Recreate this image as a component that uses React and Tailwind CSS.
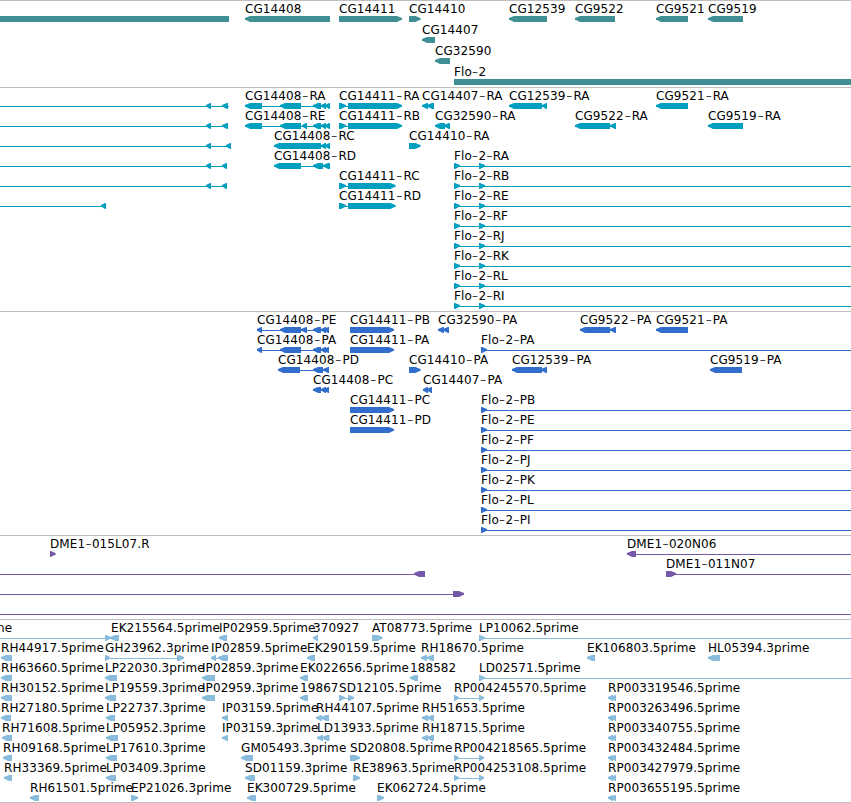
import React from "react";

const VIEW_WIDTH = 851;

// Feature: [label, strand, segments, lineStart, lineEnd]
// strand: "L" points left, "R" points right, "N" is a plain block.
const f = (label, strand, segments, lineStart, lineEnd) => ({
  label,
  strand,
  segments,
  lineStart: lineStart ?? (segments.length ? segments[0][0] : 0),
  lineEnd: lineEnd ?? (segments.length ? segments[segments.length - 1][1] : 0),
});

const floR = (name) => f(name, "R", [[454, 460], [479, 485]], 454, VIEW_WIDTH);
const floP = (name) => f(name, "R", [[481, 487]], 481, VIEW_WIDTH);
const rp = (name) => f(name, "L", [[608, 613], [611, 616]]);
const rpRight = (name) => f(name, "R", [[454, 459], [479, 484]]);

const tracks = [
  {
    name: "genes",
    height: "h-[87px]",
    row: "h-[21px]",
    color: "fill-[#408f94]",
    rows: [
      [
        f("", "N", [[0, 229]]),
        f("CG14408", "L", [[245, 330]]),
        f("CG14411", "R", [[339, 402]]),
        f("CG14410", "R", [[409, 420.5]]),
        f("CG12539", "L", [[509, 547]]),
        f("CG9522", "L", [[575, 615]]),
        f("CG9521", "L", [[656, 688]]),
        f("CG9519", "L", [[708, 743]]),
      ],
      [f("CG14407", "L", [[422, 435]])],
      [f("CG32590", "L", [[435, 450]])],
      [f("Flo-2", "N", [[454, VIEW_WIDTH]])],
    ],
  },
  {
    name: "transcripts",
    height: "h-[224px]",
    row: "h-5",
    color: "fill-[#009fbf]",
    rows: [
      [
        f("", "L", [[206, 211], [222, 228]], 0, 229),
        f("CG14408-RA", "L", [[245, 262], [280, 301], [313, 321], [321, 326], [325, 330]]),
        f("CG14411-RA", "R", [[339, 346], [348, 402]]),
        f("CG14407-RA", "L", [[422, 428], [427, 434]]),
        f("CG12539-RA", "L", [[509, 542], [542, 547]]),
        f("CG9521-RA", "L", [[656, 688]]),
      ],
      [
        f("", "L", [[206, 211], [222, 228]], 0),
        f("CG14408-RE", "L", [[245, 262], [280, 301], [302, 307], [313, 321], [321, 326], [325, 330]]),
        f("CG14411-RB", "R", [[339, 346], [348, 402]]),
        f("CG32590-RA", "L", [[435, 445], [444, 450]]),
        f("CG9522-RA", "L", [[575, 610], [610, 616]]),
        f("CG9519-RA", "L", [[708, 743]]),
      ],
      [
        f("", "L", [[206, 211], [226, 231]], 0),
        f("CG14408-RC", "L", [[274, 321], [321, 326], [325, 330]]),
        f("CG14410-RA", "R", [[409, 420.5]]),
      ],
      [
        f("", "L", [[206, 211], [222, 227]], 0),
        f("CG14408-RD", "L", [[274, 301], [313, 323], [323, 330]]),
        floR("Flo-2-RA"),
      ],
      [
        f("", "L", [[206, 211], [222, 227]], 0),
        f("CG14411-RC", "R", [[339, 346], [348, 395.5]]),
        floR("Flo-2-RB"),
      ],
      [
        f("", "L", [[101, 106]], 0),
        f("CG14411-RD", "R", [[339, 346], [348, 395.5]]),
        floR("Flo-2-RE"),
      ],
      [floR("Flo-2-RF")],
      [floR("Flo-2-RJ")],
      [floR("Flo-2-RK")],
      [floR("Flo-2-RL")],
      [floR("Flo-2-RI")],
    ],
  },
  {
    name: "proteins",
    height: "h-[224px]",
    row: "h-5",
    color: "fill-[#326dcb]",
    rows: [
      [
        f("CG14408-PE", "L", [[257, 262], [280, 301], [301, 307], [313, 321], [321, 326], [324, 329]]),
        f("CG14411-PB", "R", [[350, 394]]),
        f("CG32590-PA", "L", [[438, 444], [443, 449]]),
        f("CG9522-PA", "L", [[580, 610], [610, 616]]),
        f("CG9521-PA", "L", [[656, 688]]),
      ],
      [
        f("CG14408-PA", "L", [[257, 262], [280, 301], [313, 321], [321, 326], [324, 329]]),
        f("CG14411-PA", "R", [[350, 394]]),
        floP("Flo-2-PA"),
      ],
      [
        f("CG14408-PD", "L", [[278, 300], [313, 323], [323, 329]]),
        f("CG14410-PA", "R", [[409, 420.5]]),
        f("CG12539-PA", "L", [[512, 542], [541, 547]]),
        f("CG9519-PA", "L", [[710, 742]]),
      ],
      [
        f("CG14408-PC", "L", [[313, 321], [321, 326], [324, 329]]),
        f("CG14407-PA", "L", [[423, 428], [427, 432]]),
      ],
      [f("CG14411-PC", "R", [[350, 394]]), floP("Flo-2-PB")],
      [f("CG14411-PD", "R", [[350, 394]]), floP("Flo-2-PE")],
      [floP("Flo-2-PF")],
      [floP("Flo-2-PJ")],
      [floP("Flo-2-PK")],
      [floP("Flo-2-PL")],
      [floP("Flo-2-PI")],
    ],
  },
  {
    name: "clones",
    height: "h-[84px]",
    row: "h-5",
    color: "fill-[#7658a8]",
    rows: [
      [
        f("DME1-015L07.R", "R", [[50, 55.5]]),
        f("DME1-020N06", "L", [[627, 636]], 627, VIEW_WIDTH),
      ],
      [
        f("", "L", [[414, 425]], 0),
        f("DME1-011N07", "R", [[666, 676]], 666, VIEW_WIDTH),
      ],
      [f("", "R", [[453, 464]], 0)],
      [f("", "N", [], 0, VIEW_WIDTH)],
    ],
  },
  {
    name: "ests",
    height: "h-[184px] border-b",
    row: "h-5",
    color: "fill-[#89bcdc]",
    rows: [
      [
        { ...f("ne", "R", [[105, 111]], 0), labelX: -3 },
        { ...f("EK215564.5prime", "L", [[110, 119]]), labelX: 111 },
        f("IP02959.5prime", "L", [[219, 227]]),
        f("370927", "L", [[313, 318]]),
        f("AT08773.5prime", "R", [[372, 382.5]]),
        f("LP10062.5prime", "R", [[479, 485]], 479, VIEW_WIDTH),
      ],
      [
        f("RH44917.5prime", "L", [[1, 12]]),
        f("GH23962.3prime", "R", [[105, 110], [177, 184]]),
        f("IP02859.5prime", "L", [[211, 216], [218, 228]]),
        f("EK290159.5prime", "L", [[307, 315]]),
        f("RH18670.5prime", "L", [[421, 427], [427, 434]]),
        f("EK106803.5prime", "L", [[587, 595]]),
        f("HL05394.3prime", "L", [[708, 720]]),
      ],
      [
        f("RH63660.5prime", "L", [[1, 12]]),
        f("LP22030.3prime", "L", [[105, 117]]),
        f("IP02859.3prime", "L", [[202, 215]]),
        f("EK022656.5prime", "L", [[300, 308]]),
        f("188582", "L", [[410, 418]]),
        f("LD02571.5prime", "R", [[479, 485]], 479, VIEW_WIDTH),
      ],
      [
        f("RH30152.5prime", "L", [[1, 12]]),
        f("LP19559.3prime", "L", [[105, 116]]),
        f("IP02959.3prime", "L", [[202, 215]]),
        f("19867", "L", [[300, 308]]),
        f("SD12105.5prime", "R", [[339, 345], [348, 354]]),
        rpRight("RP004245570.5prime"),
        rp("RP003319546.5prime"),
      ],
      [
        f("RH27180.5prime", "L", [[1, 11]]),
        f("LP22737.3prime", "L", [[106, 115]]),
        f("IP03159.5prime", "L", [[222, 228]]),
        f("RH44107.5prime", "L", [[316, 322], [321, 329]]),
        f("RH51653.5prime", "L", [[422, 428], [427, 434]]),
        rp("RP003263496.5prime"),
      ],
      [
        f("RH71608.5prime", "L", [[2, 12]]),
        f("LP05952.3prime", "L", [[106, 118]]),
        f("IP03159.3prime", "L", [[222, 228]]),
        f("LD13933.5prime", "L", [[317, 323], [322, 329.5]]),
        f("RH18715.5prime", "L", [[422, 428], [427, 434]]),
        rp("RP003340755.5prime"),
      ],
      [
        f("RH09168.5prime", "L", [[3, 12]]),
        f("LP17610.3prime", "L", [[106, 117]]),
        f("GM05493.3prime", "L", [[241, 253]]),
        f("SD20808.5prime", "R", [[350, 360]]),
        rpRight("RP004218565.5prime"),
        rp("RP003432484.5prime"),
      ],
      [
        f("RH33369.5prime", "L", [[4, 12]]),
        f("LP03409.3prime", "L", [[106, 116]]),
        f("SD01159.3prime", "L", [[245, 255]]),
        f("RE38963.5prime", "R", [[353, 360]]),
        rpRight("RP004253108.5prime"),
        rp("RP003427979.5prime"),
      ],
      [
        f("RH61501.5prime", "L", [[30, 39]]),
        f("EP21026.3prime", "R", [[131, 138]]),
        f("EK300729.5prime", "L", [[247, 256]]),
        f("EK062724.5prime", "R", [[377, 384]]),
        rp("RP003655195.5prime"),
      ],
    ],
  },
];

// Arrow-shaped block, 6px tall, with a slightly blunt tip of at most 5px.
function Segment({ a, b, strand }) {
  if (strand === "N") return <rect x={a} y="15" width={b - a} height="6" />;
  const tip = Math.min(5, b - a - 0.8);
  const points =
    strand === "L"
      ? `${a},17 ${a + tip},15 ${b},15 ${b},21 ${a + tip},21 ${a},18.4`
      : `${b},17 ${b - tip},15 ${a},15 ${a},21 ${b - tip},21 ${b},18.4`;
  return <polygon points={points} />;
}

// Names are drawn with long, thin hyphens: a larger light-weight glyph,
// lowered to the height of the ordinary one.
function Label({ x, text }) {
  const parts = text.split("-");
  const gap = text.startsWith("Flo") ? 0 : text.startsWith("DME") ? 0.1 : 0.7;
  return (
    <text x={x} y="12" className="fill-black text-[12px] tracking-[0.08px]">
      {parts.map((part, i) =>
        i === 0 ? (
          part
        ) : (
          <React.Fragment key={i}>
            <tspan
              dx={gap}
              dy="1"
              className="font-['DejaVu_Sans_Light','DejaVu_Sans',sans-serif] text-[18px] font-extralight"
            >
              -
            </tspan>
            <tspan dx={gap} dy="-1">
              {part}
            </tspan>
          </React.Fragment>
        )
      )}
    </text>
  );
}

function Row({ features, size, color }) {
  return (
    <svg className={`block w-full shrink-0 overflow-visible ${size} ${color}`}>
      {features.map((feat, i) => (
        <g key={i}>
          {feat.strand !== "N" || feat.segments.length === 0 ? (
            <rect x={feat.lineStart} y="18" width={feat.lineEnd - feat.lineStart} height="1" />
          ) : null}
          {feat.segments.map(([a, b], j) => (
            <Segment key={j} a={a} b={b} strand={feat.strand} />
          ))}
          {feat.label && <Label x={feat.labelX ?? feat.segments[0][0]} text={feat.label} />}
        </g>
      ))}
    </svg>
  );
}

export default function App() {
  return (
    <main className="flex h-[803px] w-[851px] flex-col overflow-hidden bg-white font-['DejaVu_Sans',sans-serif]">
      {tracks.map((track) => (
        <section
          key={track.name}
          className={`flex shrink-0 flex-col border-t border-[#bebebe] ${track.height}`}
        >
          {track.rows.map((features, i) => (
            <Row key={i} features={features} size={track.row} color={track.color} />
          ))}
        </section>
      ))}
    </main>
  );
}
